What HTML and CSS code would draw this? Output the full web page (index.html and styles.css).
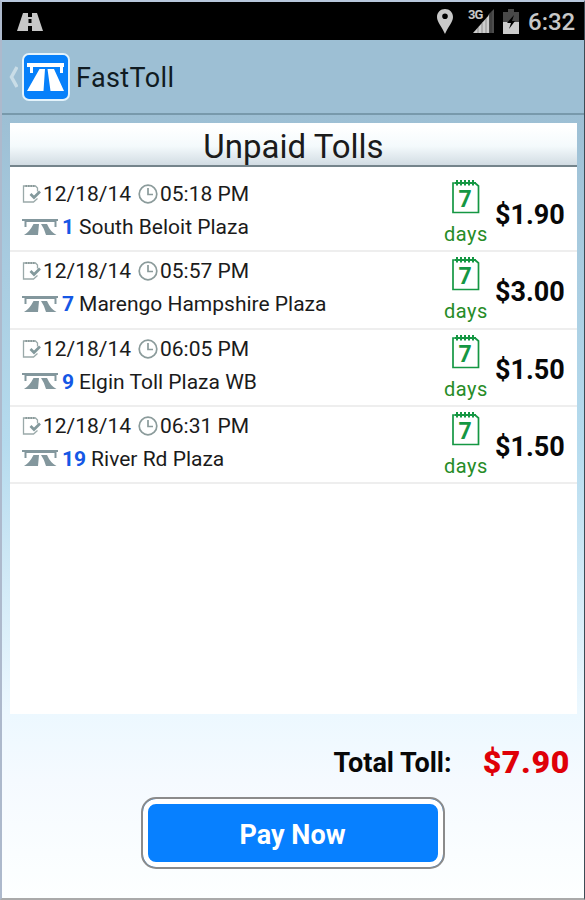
FILE: index.html
```
<!DOCTYPE html>
<html lang="en">
<head>
<meta charset="utf-8">
<title>FastToll</title>
<link rel="stylesheet" href="styles.css">
</head>
<body>
<svg class="defs" width="0" height="0">
  <symbol id="date" viewBox="0 0 20 20"><path d="M5 2H1.500V18H11.500L15.500 14.500M15.500 7.500V4L13.500 2H4" fill="none" stroke="#9aa9a9" stroke-width="1.300"/><path d="M3.500 2H13" stroke="#899999" stroke-width="2" stroke-dasharray="1.500 1"/><path d="M8.500 10L12 13.500L18 7.500" fill="none" stroke="#83999c" stroke-width="2.700"/></symbol>
  <symbol id="clock" viewBox="0 0 20 20"><circle cx="10" cy="10" r="8.800" fill="none" stroke="#8b9b9b" stroke-width="1.700"/><path d="M10 4V10.500H15" fill="none" stroke="#8b9b9b" stroke-width="1.700"/></symbol>
  <symbol id="bridge" viewBox="0 0 36 17"><path d="M0 0H36V2H34.500V8H32.500V3H4.500V8H2.500V2H0Z"/><path d="M11.500 5H17L16 16H2Q7.500 13 11.500 5ZM19 5H25Q28.500 13 34.500 16H24Q22 9 19 5Z"/></symbol>
  <symbol id="calendar" viewBox="0 0 30 36"><path d="M4 4H2V33.500H27.500V7L24 4" fill="none" stroke="#159743" stroke-width="1.700"/><path d="M4 4H25" stroke="#159743" stroke-width="2"/><path d="M6 1V6.500M10 1V6.500M14 1V6.500M18 1V6.500M22 1V6.500" stroke="#159743" stroke-width="2"/></symbol>
</svg>
<div class="phone">
  <header class="status">
    <svg class="road" width="26" height="18" viewBox="0 0 26 18"><path d="M6 0H20L26 18H0Z" fill="#c6c6c6"/><path d="M13 0V4M13 13V18" stroke="#000" stroke-width="4"/><path d="M13 6V10" stroke="#000" stroke-width="3"/></svg>
    <svg class="pin" width="16" height="25" viewBox="0 0 16 25"><path fill-rule="evenodd" d="M8 0C3.500 0 0 3.500 0 8C0 13 5 18 8 25C11 18 16 13 16 8C16 3.500 12.500 0 8 0ZM8 4.500A2.800 2.800 0 1 1 8 10.100A2.800 2.800 0 0 1 8 4.500Z" fill="#c8c8c8"/></svg>
    <span class="network"><svg class="signal" width="27" height="26" viewBox="0 0 27 26"><path d="M20 7L26 1V25H20Z" fill="#4b4b4b"/><path d="M5 25L21 7V25Z" fill="#ccc"/><path d="M10 19V25M14 15V25M18 10V25M23 4V25" stroke="#000" stroke-opacity=".3"/></svg><small>3G</small></span>
    <svg class="battery" width="16" height="25" viewBox="0 0 16 25"><path d="M5 0H11V3H16V13H0V3H5Z" fill="#484848"/><path d="M0 13H16V25H0Z" fill="#ccc"/><path d="M11 6L4 14H8L6 20L12 12H9Z" fill="#000"/></svg>
    <span class="time">6:32</span>
  </header>
  <nav class="bar">
    <svg class="back" width="10" height="22" viewBox="0 0 10 22"><path d="M9 1L3.500 11L9 21" fill="none" stroke="#c9dde7" stroke-width="3.500"/></svg>
    <svg class="logo" width="48" height="48" viewBox="0 0 48 48"><rect x="1" y="1" width="46" height="46" rx="6" fill="#0680fa" stroke="#e4f3fb" stroke-width="2"/><path d="M5 10H42V14H41V20H38V14H11V20H8V14H5Z" fill="#fff"/><path d="M17.500 16H23L21.500 38H5ZM25.500 16H32L42 38H28.500Z" fill="#fff"/></svg>
    <h1>FastToll</h1>
  </nav>
  <main>
    <section class="panel">
      <h2>Unpaid Tolls</h2>
      <ul>
        <li><div class="info"><p class="when"><svg class="i-date"><use href="#date"/></svg><span class="date">12/18/14</span><svg class="i-clock"><use href="#clock"/></svg><span>05:18 PM</span></p><p class="place"><svg class="i-bridge"><use href="#bridge"/></svg><b>1</b><span>South Beloit Plaza</span></p></div><div class="due"><div class="cal"><svg class="i-cal"><use href="#calendar"/></svg><b>7</b></div><span>days</span></div><strong>$1.90</strong></li>
        <li><div class="info"><p class="when"><svg class="i-date"><use href="#date"/></svg><span class="date">12/18/14</span><svg class="i-clock"><use href="#clock"/></svg><span>05:57 PM</span></p><p class="place"><svg class="i-bridge"><use href="#bridge"/></svg><b>7</b><span>Marengo Hampshire Plaza</span></p></div><div class="due"><div class="cal"><svg class="i-cal"><use href="#calendar"/></svg><b>7</b></div><span>days</span></div><strong>$3.00</strong></li>
        <li><div class="info"><p class="when"><svg class="i-date"><use href="#date"/></svg><span class="date">12/18/14</span><svg class="i-clock"><use href="#clock"/></svg><span>06:05 PM</span></p><p class="place"><svg class="i-bridge"><use href="#bridge"/></svg><b>9</b><span>Elgin Toll Plaza WB</span></p></div><div class="due"><div class="cal"><svg class="i-cal"><use href="#calendar"/></svg><b>7</b></div><span>days</span></div><strong>$1.50</strong></li>
        <li><div class="info"><p class="when"><svg class="i-date"><use href="#date"/></svg><span class="date">12/18/14</span><svg class="i-clock"><use href="#clock"/></svg><span>06:31 PM</span></p><p class="place"><svg class="i-bridge"><use href="#bridge"/></svg><b>19</b><span>River Rd Plaza</span></p></div><div class="due"><div class="cal"><svg class="i-cal"><use href="#calendar"/></svg><b>7</b></div><span>days</span></div><strong>$1.50</strong></li>
      </ul>
    </section>
    <div class="total"><span>Total Toll:</span><strong>$7.90</strong></div>
    <button class="pay" type="button">Pay Now</button>
  </main>
</div>
</body>
</html>
```
FILE: styles.css
```
* { box-sizing: border-box; margin: 0; padding: 0; }
body { width: 585px; height: 900px; overflow: hidden; font-family: Roboto, "Liberation Sans", sans-serif; background: #b3bfd2; color: #1b1b1b; }
svg { display: block; flex: none; }
.defs { position: absolute; }
.phone { height: 900px; border: solid; border-width: 2px 1px 2px 2px; border-color: #b8c7dc #3d4b55 #aaa #adb9cc; display: flex; flex-direction: column; }
.status { height: 38px; background: #000; display: flex; align-items: center; padding-right: 9px; color: #c8c8c8; }
.road { margin-left: 15px; margin-top: 1px; }
.pin { margin-left: auto; }
.network { display: grid; margin-left: 15px; }
.network > * { grid-area: 1 / 1; }
.network small { font-size: 13px; line-height: 13px; font-weight: 700; letter-spacing: -1px; }
.battery { margin-left: 8px; }
.time { font-size: 24px; line-height: 36px; font-weight: 500; width: 47px; margin: 2px 0 0 9px; white-space: nowrap; }
.bar { height: 75px; background: #9dbfd4; border-bottom: 2px solid #7899ab; display: flex; align-items: center; padding-left: 6px; }
.logo { margin-left: 4px; }
h1 { font-size: 27px; font-weight: 400; margin: 2px 0 0 6px; letter-spacing: .4px; color: #101b22; }
main { flex: 1; padding: 8px 7px 0 8px; background: linear-gradient(#9dbfd4, #b5dbee 42%, #ecf8ff 76%, #f5faff 85%, #fdffff); display: flex; flex-direction: column; }
.panel { height: 591px; background: #fff; }
h2 { height: 44px; border-bottom: 2px solid #75848b; background: linear-gradient(#fff 10%, #f4fafc 55%, #d2dce3); text-align: center; font-size: 33px; line-height: 47px; font-weight: 400; }
ul { list-style: none; padding-top: 8px; }
li { height: 77.3px; border-bottom: 2px solid #eee; display: flex; align-items: center; padding-left: 12px; }
.info { width: 417px; align-self: flex-start; padding-top: 4px; }
.when, .place { display: flex; align-items: center; font-size: 21px; line-height: 30px; white-space: nowrap; }
.place { margin-top: 3px; }
.i-date { width: 20px; height: 20px; margin-right: 1px; }
.date { width: 95px; }
.i-clock { width: 20px; height: 20px; margin-right: 2px; }
.i-bridge { width: 36px; height: 17px; fill: #83979d; margin-right: 4px; }
.place b { color: #1557e5; margin-right: 5px; }
.due { width: 54px; align-self: flex-start; padding-top: 4px; display: flex; flex-direction: column; align-items: center; color: #278c27; font-size: 20px; line-height: 24px; letter-spacing: .5px; }
.cal { display: grid; margin-bottom: 7px; }
.cal > * { grid-area: 1 / 1; }
.cal b { place-self: center; margin: 6px 2px 0 0; font-size: 23px; line-height: 24px; letter-spacing: 0; color: #159743; }
.i-cal { width: 30px; height: 36px; }
li strong { font-size: 27px; margin: 5px 0 0 2px; color: #080808; }
.total { height: 83px; padding-top: 15px; display: flex; justify-content: flex-end; align-items: flex-start; line-height: 68px; color: #080808; font-size: 27px; font-weight: 700; }
.total strong { font-size: 32px; letter-spacing: .7px; color: #df0008; margin: -1px 7px 0 31px; }
.pay { align-self: center; width: 304px; height: 72px; margin-right: 2px; padding-top: 3px; border: 2px solid #8b8b8b; border-radius: 15px; background: #0780ff; box-shadow: inset 0 0 0 5px #fff; color: #fff; font: 700 27px Roboto, "Liberation Sans", sans-serif; }
```
